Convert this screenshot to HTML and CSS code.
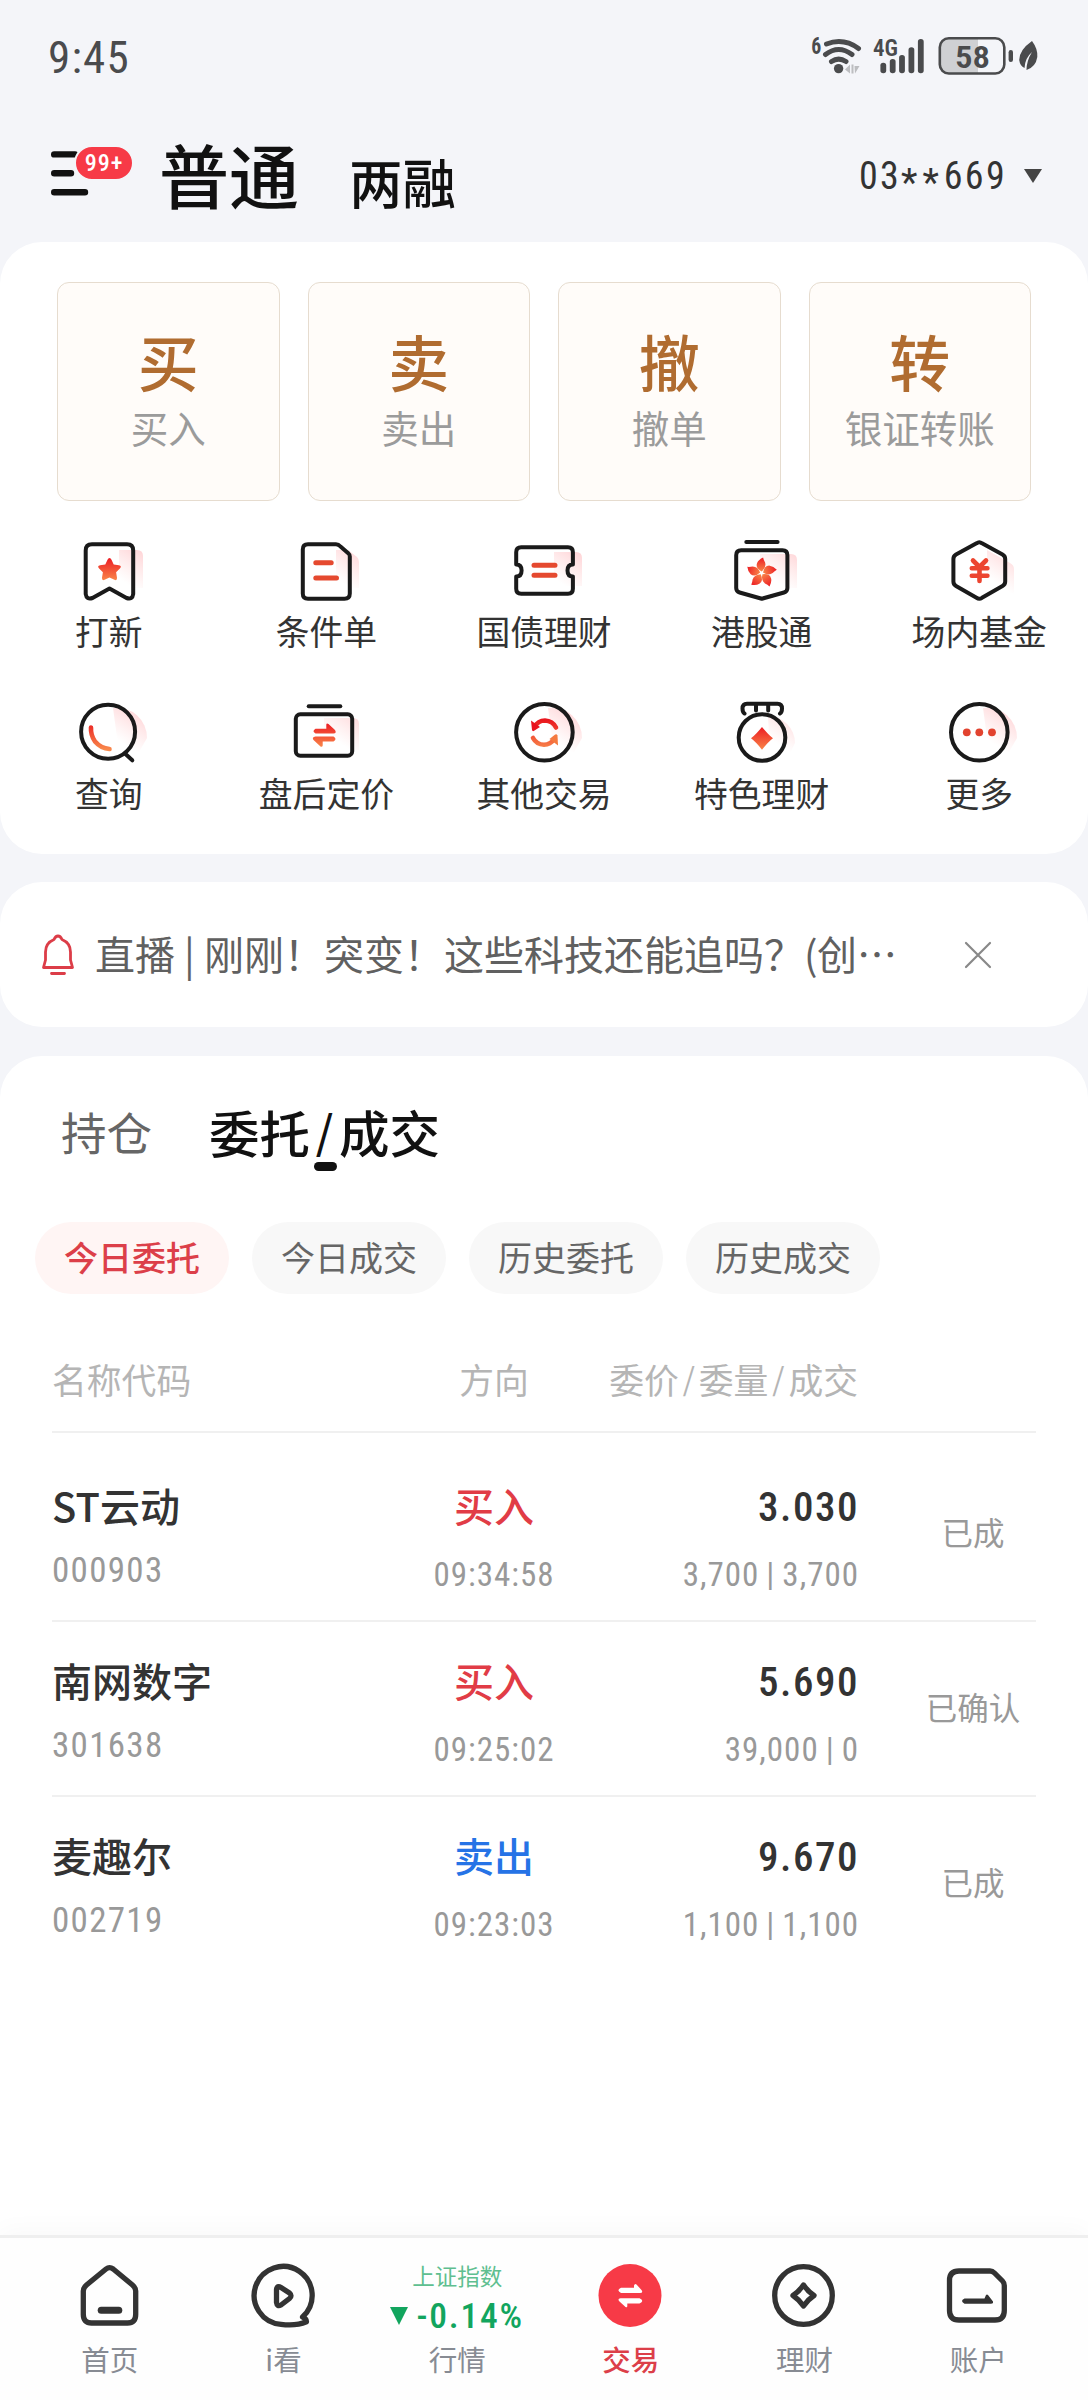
FILE: index.html
```html
<!DOCTYPE html>
<html lang="zh-CN">
<head>
<meta charset="utf-8">
<title>交易</title>
<link rel="stylesheet" href="styles.css">
</head>
<body>
<svg class="defs" width="0" height="0" aria-hidden="true">
  <defs>
    <linearGradient id="hot" x1="0" y1="0" x2="0" y2="1"><stop offset="0" stop-color="#ec1c24"/><stop offset="1" stop-color="#f98548"/></linearGradient>
    <linearGradient id="hotBox" gradientUnits="userSpaceOnUse" x1="0" y1="20" x2="0" y2="52"><stop offset="0" stop-color="#e8101c"/><stop offset="1" stop-color="#f98a4c"/></linearGradient>
    <linearGradient id="glow" gradientUnits="userSpaceOnUse" x1="68" y1="14" x2="48" y2="44"><stop offset="0" stop-color="#ff9aa0" stop-opacity=".42"/><stop offset="1" stop-color="#ffb0b0" stop-opacity="0"/></linearGradient>
  </defs>
</svg>
<div class="screen">
  <div class="status">
    <span class="clock num">9:45</span>
    <svg class="status-icons" width="240" height="50" viewBox="0 0 240 50" fill="#4a4b4d">
      <text class="num" x="11.3" y="23.8" font-size="23" font-weight="700" textLength="10" lengthAdjust="spacingAndGlyphs">6</text>
      <g fill="none" stroke="#4a4b4d" stroke-width="5" stroke-linecap="round">
        <path d="M31.5 31.5Q38.6 26.8 46 31.5"/>
        <path d="M25.500 24.500Q38.600 14.500 52 24.500"/>
        <path d="M26.500 14Q43.500 7.500 58.500 18.500"/>
      </g>
      <circle cx="38.6" cy="38.6" r="4.7"/>
      <path fill="#bcbdc0" d="M45 39.5l5-5v9zM51.500 34.500h2v9h-2zM54.500 36h5l-4.500 7.500z"/>
      <text class="num" x="73" y="26" font-size="24" font-weight="600" textLength="25" lengthAdjust="spacingAndGlyphs">4G</text>
      <rect x="80.400" y="32.700" width="5.800" height="10.600" rx="2.800"/>
      <rect x="89.800" y="29" width="5.800" height="14.300" rx="2.800"/>
      <rect x="99.100" y="25" width="5.800" height="18.300" rx="2.800"/>
      <rect x="108.500" y="17.300" width="5.800" height="26" rx="2.800"/>
      <rect x="117.900" y="9" width="5.800" height="34.300" rx="2.800"/>
      <path fill="#cfd0d3" d="M148 9h30v34h-30q-8 0-8-8v-18q0-8 8-8z"/>
      <rect x="139.800" y="8.300" width="64.500" height="35.200" rx="9" fill="none" stroke="#4a4b4d" stroke-width="2.600"/>
      <text class="num" x="155" y="38.200" font-size="32" font-weight="600" textLength="35" lengthAdjust="spacingAndGlyphs">58</text>
      <rect x="208.600" y="20" width="4.400" height="12" rx="2.200"/>
      <path d="M232 11q6 8 5.300 16q-1.500 10-10.800 13q0-9 5.500-18q-7 6-7.500 16q-4.500-2-5.300-8q0-10 12.800-19z"/>
    </svg>
  </div>

  <header class="top">
    <div class="menu">
      <svg width="44" height="48" viewBox="0 0 44 48" stroke="#111" stroke-width="6.400" stroke-linecap="round"><path d="M7.200 3.400H28M7.200 22.300H24M7.200 41.300H38"/></svg>
      <span class="badge num">99+</span>
    </div>
    <div class="modes"><span class="mode on">普通</span><span class="mode">两融</span></div>
    <div class="account num"><span>03<span class="mask">**</span>669</span><i class="caret"></i></div>
  </header>

  <section class="card trade">
    <div class="tiles">
      <div class="tile"><b>买</b><span>买入</span></div>
      <div class="tile"><b>卖</b><span>卖出</span></div>
      <div class="tile"><b>撤</b><span>撤单</span></div>
      <div class="tile"><b>转</b><span>银证转账</span></div>
    </div>
    <div class="grid">
      <div class="entry">
        <svg class="ico" viewBox="0 0 72 72"><path class="glow" d="M46 14h18q6 0 6 6v32h-24z"/><path class="line" d="M19 8.300H54Q60.200 8.300 60.200 14.500V58Q59.500 64 53.500 62L36.500 52.500L19.500 62Q13.500 64 12.700 58V14.500Q12.700 8.300 19 8.300z"/><path class="hot" d="M36.500 22q1.300 0 2 1.700l2.200 4.800 5.200.7q3.400.7 1 3.300l-3.800 3.800.9 5.400q.4 2.700-2 2.400L36.500 41.500l-5.500 2.600q-2.400.3-2-2.400l.9-5.400-3.800-3.800q-2.400-2.600 1-3.300l5.200-.7 2.200-4.800q.7-1.700 2-1.700z"/></svg>
        <span>打新</span>
      </div>
      <div class="entry">
        <svg class="ico" viewBox="0 0 72 72"><path class="glow" d="M46 14h12l9 7q2 2 2 5v26h-23z"/><path class="line" d="M18 8.300H46Q48.500 8.300 50.500 10.500L58.500 17.500Q59.800 18.500 59.800 20.500V57.500Q59.800 62.700 54.500 62.700H18Q12.800 62.700 12.800 57.500V13.500Q12.800 8.300 18 8.300z"/><path class="bars" d="M25.800 26.700H41.200M25.800 42H46.500"/></svg>
        <span>条件单</span>
      </div>
      <div class="entry">
        <svg class="ico" viewBox="0 0 72 72"><path class="glow" d="M46 16h22q6 0 6 6v28h-28z"/><path class="line" d="M13.200 11.300H60Q64.900 11.300 64.900 16.200V28.500Q59.500 28.500 59.500 34.500Q59.500 40.500 64.900 40.500V52.700Q64.900 57.700 60 57.700H13.200Q8.200 57.700 8.200 52.700V40.500Q13.600 40.500 13.600 34.500Q13.600 28.500 8.200 28.500V16.200Q8.200 11.300 13.200 11.300z"/><path class="bars" d="M26 29.300H47M26 39.300H47"/></svg>
        <span>国债理财</span>
      </div>
      <div class="entry">
        <svg class="ico" viewBox="0 0 72 72"><path class="glow" d="M34 18h31q6 0 6 6v28h-37z"/><path class="line" d="M20.300 6H51.600M15.200 14.300H56.500Q61.400 14.300 61.400 19.300V52Q61.400 55.500 58 56.500L35.800 62.700L13.600 56.500Q10.200 55.500 10.200 52V19.300Q10.200 14.300 15.200 14.300z"/>
          <g class="hot" transform="translate(35.600 37)"><path id="petal" d="M0-1.500Q-6.500-5-4.500-10Q-3-13.500 1.500-15.500Q2-13 3.500-10.500Q5-5.500 0-1.500z"/><use href="#petal" transform="rotate(72)"/><use href="#petal" transform="rotate(144)"/><use href="#petal" transform="rotate(216)"/><use href="#petal" transform="rotate(288)"/></g></svg>
        <span>港股通</span>
      </div>
      <div class="entry">
        <svg class="ico" viewBox="0 0 72 72"><path class="glow" d="M44 14l23 13q4 2 4 6v25h-27z"/><path class="line" d="M33.500 7.300Q36.300 5.200 39 7.300L59.500 18.500Q62.200 20 62.200 23V45.500Q62.200 48.500 59.500 50L39 61.800Q36.300 63.600 33.500 61.800L13 50Q10.400 48.500 10.400 45.500V23Q10.400 20 13 18.500z"/><path fill="none" stroke="#ec4530" stroke-width="4.600" stroke-linecap="round" stroke-linejoin="round" d="M30 24.500L36.500 31L43 24.500M28.800 32.300H44.400M28.800 39.700H44.400M36.500 31.500V45"/></svg>
        <span>场内基金</span>
      </div>
      <div class="entry">
        <svg class="ico" viewBox="0 0 72 72"><path class="glow" d="M40 10a30 30 0 0 1 34 30l-8 14h-20z"/><circle class="line" cx="35.100" cy="33.700" r="27"/><path class="line" d="M52.500 56L59.300 62.300"/><path class="sweep" d="M18 29.500Q17.500 37 22 43.500Q28 50.500 36.500 51"/></svg>
        <span>查询</span>
      </div>
      <div class="entry">
        <svg class="ico" viewBox="0 0 72 72"><path class="glow" d="M34 20h29q6 0 6 6v26h-35z"/><path class="line" d="M18.700 8.300H50.300"/><rect class="line" x="5.800" y="16.300" width="56.400" height="41.400" rx="4.500"/><path class="hot" d="M25.500 30.800H36.300V26.800Q36.500 24.500 38.500 26L45 32Q47 35.300 43.500 35.500H25.500Q21.500 33.200 25.500 30.800zM43.500 38.500H25.500Q21.500 39 23.500 42L30.500 48.500Q32.300 49.500 32.700 47.500V43.500H43.500Q47.500 41 43.500 38.500z"/></svg>
        <span>盘后定价</span>
      </div>
      <div class="entry">
        <svg class="ico" viewBox="0 0 72 72"><path class="glow" d="M40 10a30 30 0 0 1 34 30l-8 14h-20z"/><circle class="line" cx="36.400" cy="34.300" r="28.300"/><path class="sweep" d="M26.500 29Q30 22.500 37 22.500Q44.500 22.800 48 29.500M25 40Q28.500 46.500 36 46.800Q42.500 46.500 46 41.500"/><path fill="#e9131f" d="M23 22.500L24 32Q24.500 34 26.500 32.500L32 29z"/><path fill="#f5793f" d="M50 47.500L49.500 37.500Q48.500 35.500 46.500 37L41.500 41z"/></svg>
        <span>其他交易</span>
      </div>
      <div class="entry">
        <svg class="ico" viewBox="0 0 72 72"><path class="glow" d="M42 18a27 27 0 0 1 27 27l-5 10h-20z"/><circle class="line" cx="36" cy="39.500" r="23.300"/><path class="line" d="M18.500 15.500Q16.500 14 16.500 10.500Q16.500 5.700 21 5.700H51.500Q56 5.700 56 10.500Q56 14 54 15.500M30 7V12.500M42.200 7V12.500"/><path class="hot" d="M36 29Q38.500 32 41.500 35.300T47 40.300Q44.500 42 41.500 45.300T36 51.700Q33.500 48.500 30.500 45.300T25 40.300Q27.500 38.500 30.500 35.300T36 29z"/></svg>
        <span>特色理财</span>
      </div>
      <div class="entry">
        <svg class="ico" viewBox="0 0 72 72"><path class="glow" d="M40 10a30 30 0 0 1 34 30l-8 14h-20z"/><circle class="line" cx="36.300" cy="34.300" r="28.300"/><g fill="#e2432f"><circle cx="23.800" cy="34.300" r="3.900"/><circle cx="36.300" cy="34.300" r="3.900"/><circle cx="49" cy="34.300" r="3.900"/></g></svg>
        <span>更多</span>
      </div>
    </div>
  </section>

  <section class="card notice">
    <svg class="bell" width="34" height="42" viewBox="0 0 34 42" fill="none" stroke="#dc3d48" stroke-width="2.800" stroke-linejoin="round" stroke-linecap="round"><path d="M13 5.500Q14.500 2 17 2Q19.500 2 21 5.500Q29.500 9 29.500 18V26L31.500 33.500H2.500L4.500 26V18Q4.500 9 13 5.500zM10.500 39.500H23.500"/></svg>
    <p>直播<span class="sep">|</span>刚刚！突变！这些科技还能追吗？<span class="paren">(</span>创…</p>
    <svg class="close" width="28" height="28" viewBox="0 0 28 28" stroke="#888" stroke-width="2.200" stroke-linecap="round"><path d="M2 2L26 26M26 2L2 26"/></svg>
  </section>

  <section class="card orders">
    <div class="tabs"><span class="tab">持仓</span><span class="tab on">委托<em>/</em>成交</span></div>
    <div class="chips"><span class="chip on">今日委托</span><span class="chip">今日成交</span><span class="chip">历史委托</span><span class="chip">历史成交</span></div>
    <div class="table">
      <div class="row head"><span>名称代码</span><span class="mid">方向</span><span class="right">委价<i>/</i>委量<i>/</i>成交</span></div>
      <div class="row first">
        <div><div class="name">ST云动</div><div class="code num">000903</div></div>
        <div class="mid"><div class="side buy">买入</div><div class="sub num">09:34:58</div></div>
        <div class="right"><div class="price num">3.030</div><div class="sub num">3,700<i>|</i>3,700</div></div>
        <div class="state">已成</div>
      </div>
      <div class="row">
        <div><div class="name">南网数字</div><div class="code num">301638</div></div>
        <div class="mid"><div class="side buy">买入</div><div class="sub num">09:25:02</div></div>
        <div class="right"><div class="price num">5.690</div><div class="sub num">39,000<i>|</i>0</div></div>
        <div class="state">已确认</div>
      </div>
      <div class="row">
        <div><div class="name">麦趣尔</div><div class="code num">002719</div></div>
        <div class="mid"><div class="side sell">卖出</div><div class="sub num">09:23:03</div></div>
        <div class="right"><div class="price num">9.670</div><div class="sub num">1,100<i>|</i>1,100</div></div>
        <div class="state">已成</div>
      </div>
    </div>
  </section>

  <nav class="nav">
    <div class="item">
      <svg class="ico" viewBox="0 0 72 72" fill="none" stroke="#333" stroke-width="5.300"><path d="M32 9Q35.500 6.300 39.200 9L58.500 25Q61.700 27.700 61.700 31V54.500Q61.700 63 53.500 63H17.500Q9.300 63 9.300 54.500V31Q9.300 27.700 12.500 25z"/><path stroke-width="7" stroke-linecap="round" d="M27.200 50.300H44.800"/></svg>
      <span>首页</span>
    </div>
    <div class="item">
      <svg class="ico" viewBox="0 0 72 72" fill="none" stroke="#333" stroke-width="5.300" stroke-linejoin="round"><path d="M55.500 57A29 29 0 1 0 34 64.300Q49 66.200 59.500 61.800Q59.500 58.500 55.500 57z"/><path d="M29.500 29.500Q30 25 34 27.500L42.500 33Q45.500 35.500 42.500 38.500L34 45Q30 47 29.500 42.500z"/></svg>
      <span>i看</span>
    </div>
    <div class="item">
      <div class="index"><span class="index-name">上证指数</span><span class="index-val num"><i class="down"></i>-0.14%</span></div>
      <span>行情</span>
    </div>
    <div class="item on">
      <svg class="ico" viewBox="0 0 72 72"><circle cx="35" cy="35.500" r="31.500" fill="#f73a47"/><path fill="#fff" d="M26 27.700H39V25.500Q39.800 23 41.500 24.500L46.500 30Q48.500 33 45 33H26Q20.800 30.300 26 27.700zM44.500 38.300H25.500Q22 39 24.500 41.500L30.500 47Q32.300 48 32.300 46V43.600H44.500Q50 41 44.500 38.300z"/></svg>
      <span>交易</span>
    </div>
    <div class="item">
      <svg class="ico" viewBox="0 0 72 72" fill="none" stroke="#333" stroke-width="5.300"><circle cx="35.500" cy="35.500" r="28.800"/><path stroke-linejoin="round" d="M35.500 25Q40 31.500 46 35.500Q40 39.500 35.500 46Q31 39.500 25 35.500Q31 31.500 35.500 25z"/></svg>
      <span>理财</span>
    </div>
    <div class="item">
      <svg class="ico" viewBox="0 0 72 72" fill="none" stroke="#333" stroke-width="5.300" stroke-linejoin="round"><path d="M17 11H48Q50.500 11 52.500 13L60.500 21Q62.300 22.800 62.300 25.500V50.500Q62.300 60 53 60H17Q7.500 60 7.500 50.500V20.500Q7.500 11 17 11z"/><path fill="#333" stroke="none" d="M22.500 38.500H42.500L44 35Q45 34 46 35L51 41.500Q51.500 43.700 49 43.700H22.500Q17.500 41 22.500 38.500z"/></svg>
      <span>账户</span>
    </div>
  </nav>
</div>
</body>
</html>
```
FILE: styles.css
```css
* { box-sizing: border-box; margin: 0; padding: 0; }
body {
  width: 1088px;
  background: #f4f5f9;
  color: #333;
  font-family: "Noto Sans CJK SC", "Liberation Sans", sans-serif;
}
i, em { font-style: normal; }
.defs { position: absolute; }
.num { font-family: "Roboto Condensed", Roboto, "Noto Sans CJK SC", sans-serif; }
.screen { display: flex; flex-direction: column; height: 2400px; overflow: hidden; }

.status { display: flex; justify-content: space-between; align-items: flex-start; height: 110px; padding: 30px 48px 0 48px; }
.clock { padding-top: 1px; font-size: 45px; line-height: 54px; letter-spacing: 1.2px; color: #4a4b4d; }

.top { display: flex; align-items: center; height: 132px; padding: 0 46px 4px 47px; }
.menu { position: relative; width: 112px; height: 54px; padding-top: 4px; }
.menu svg { display: block; }
.badge {
  position: absolute; left: 27px; top: -2px; width: 60px; height: 36px;
  border: 2px solid #f4f5f9; border-radius: 18px; background: #f73a47; color: #fff;
  font-size: 24px; line-height: 32px; text-align: center; letter-spacing: 1px; font-weight: 500;
}
.modes { display: flex; align-items: baseline; gap: 50px; flex: 1; padding-top: 7px; line-height: 100px; color: #111; }
.mode { font-size: 53.5px; font-weight: 500; }
.mode:not(.on) { padding-top: 2px; }
.mode.on { font-size: 70px; }
.account { display: flex; align-items: center; gap: 17px; padding-top: 3px; font-size: 38px; line-height: 44px; letter-spacing: 2.3px; }
.mask { position: relative; top: 7px; letter-spacing: 5px; }
.caret { border: 9px solid transparent; border-top: 14px solid #444; border-bottom: 0; }

.card { background: #fff; border-radius: 42px; }
.trade { height: 612px; padding-top: 40px; }
.tiles { display: grid; grid-template-columns: repeat(4, 1fr); gap: 28px; padding: 0 57px; }
.tile {
  display: flex; flex-direction: column; align-items: center; height: 219px; padding-top: 34px;
  border: 1px solid #e6dccf; border-radius: 12px; background: #fffcf9;
}
.tile b { font-size: 61px; line-height: 88px; font-weight: 500; color: #b06c30; }
.tile span { font-size: 37.5px; line-height: 44px; color: #9b9b9b; }
.grid { display: grid; grid-template-columns: repeat(5, 1fr); padding-top: 35px; }
.entry { display: flex; flex-direction: column; align-items: center; height: 162px; font-size: 33.8px; line-height: 46px; white-space: nowrap; }
.ico { display: block; width: 72px; height: 72px; overflow: visible; }
.line { fill: none; stroke: #1a1a1a; stroke-width: 4; stroke-linecap: round; stroke-linejoin: round; }
.glow { fill: url(#glow); }
.hot { fill: url(#hot); }
.bars { fill: none; stroke: #e5492f; stroke-width: 5; stroke-linecap: round; }
.sweep { fill: none; stroke: url(#hotBox); stroke-width: 4.6; stroke-linecap: round; }

.notice { display: flex; align-items: center; height: 145px; margin: 28px 0 29px; padding: 0 96px 0 41px; }
.notice p { flex: 1; padding: 0 0 4px 20px; font-size: 40px; line-height: 50px; color: #606060; white-space: nowrap; }
.sep { display: inline-block; width: 29px; text-align: center; }
.paren { display: inline-block; width: 13px; }

.orders { flex: 1; border-radius: 42px 42px 0 0; }
.tabs { display: flex; align-items: center; height: 166px; padding: 0 0 16px 61px; gap: 57px; }
.tab { font-size: 45.5px; line-height: 60px; color: #666; }
.tab.on { position: relative; font-size: 50.5px; font-weight: 500; color: #111; }
.tab em { display: inline-block; width: 29px; line-height: 40px; font-size: 45px; text-align: center; vertical-align: 4px; }
.tab.on::after { content: ""; position: absolute; left: 50%; bottom: -10px; width: 23px; height: 9px; margin-left: -11px; border-radius: 5px; background: #111; }
.chips { display: flex; gap: 23px; padding-left: 35px; }
.chip { width: 194px; height: 72px; border-radius: 36px; background: #f8f8f8; color: #666; font-size: 34px; line-height: 69px; text-align: center; }
.chip.on { background: #fff5f4; color: #dc3f49; font-weight: 500; }

.table { padding: 0 52px; }
.row { display: grid; grid-template-columns: 300px 284px 222px 178px; height: 175px; padding-top: 35px; border-bottom: 2px solid #f0f0f0; }
.row:last-child { border-bottom: 0; }
.row.head { height: 139px; padding-top: 60px; font-size: 34.8px; line-height: 50px; color: #b5b5b5; }
.row.head .right { justify-self: end; }
.row.head i { display: inline-block; width: 20px; text-align: center; font-size: 31px; line-height: 40px; vertical-align: 3px; }
.row.first { height: 189px; padding-top: 49px; }
.mid { text-align: center; }
.right { text-align: right; white-space: nowrap; }
.name, .side { font-size: 40px; line-height: 46px; white-space: nowrap; }
.name { font-weight: 500; color: #333; }
.side { font-weight: 500; }
.buy { color: #e13c46; }
.sell { color: #2673e6; }
.code { font-size: 35px; line-height: 40px; margin-top: 23px; letter-spacing: 1.3px; color: #999; }
.sub { font-size: 33px; line-height: 40px; margin-top: 27px; letter-spacing: 1px; color: #999; }
.sub i { display: inline-block; width: 23px; text-align: center; }
.price { font-size: 41px; line-height: 46px; letter-spacing: 1.5px; font-weight: 500; position: relative; top: 2px; }
.right .num { margin-right: -1px; }
.state { padding: 27px 0 0 50px; margin-right: -2px; font-size: 31.5px; line-height: 44px; color: #999; text-align: center; }

.nav {
  position: relative; z-index: 1; display: grid; grid-template-columns: repeat(6, 1fr); height: 165px; padding: 22px 23px 0;
  border-top: 3px solid #efefef; background: #fefefe; box-shadow: 0 -4px 24px rgba(0, 0, 0, .03);
}
.item { display: flex; flex-direction: column; align-items: center; gap: 8px; font-size: 28.5px; line-height: 38px; color: #878b93; }
.item.on { color: #dc3f49; font-weight: 500; }
.index { display: flex; flex-direction: column; align-items: center; height: 72px; color: #12a55e; }
.index-name { font-size: 22.5px; line-height: 30px; color: #5fbf90; }
.index-val { display: flex; align-items: center; gap: 8px; font-size: 35.5px; line-height: 42px; margin-top: 5px; letter-spacing: 1.8px; font-weight: 500; white-space: nowrap; }
.down { border: 9px solid transparent; border-top: 18px solid #12a55e; border-bottom: 0; }
```
